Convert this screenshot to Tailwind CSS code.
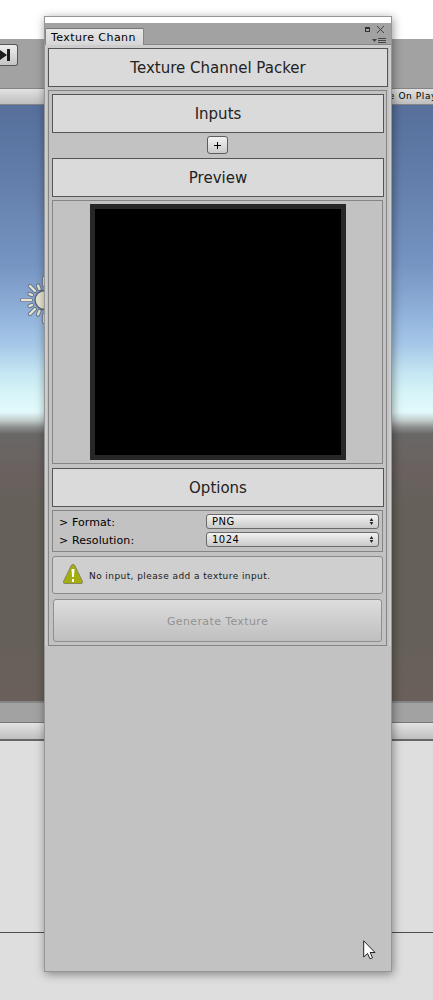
<!DOCTYPE html>
<html lang="en"><head><meta charset="utf-8"><title>Texture Channel Packer</title>
<script src="https://cdn.jsdelivr.net/npm/@tailwindcss/browser@4"></script></head>
<body class="relative h-[1000px] w-[433px] overflow-hidden bg-white font-['DejaVu_Sans',sans-serif] text-black">
<!-- editor behind the window -->
<div class="flex h-[1000px] flex-col">
  <div class="h-[39px] bg-white"></div>
  <div class="h-[49px] bg-[#a2a2a2] pt-[5px]">
    <div class="flex h-[22px] w-[18px] items-center rounded-r-[3px] border border-l-0 border-[#555] bg-linear-to-b from-[#eee] to-[#c4c4c4]">
      <svg width="12" height="14" viewBox="0 0 12 14"><path d="M0 2L7 7L0 12zM7 1h3v12H7z" fill="#1c1c1c"/></svg>
    </div>
  </div>
  <div class="flex h-[17px] items-center justify-end border-t border-b border-[#858585] bg-linear-to-b from-[#e2e2e2] to-[#bebebe]">
    <span class="-mr-[4px] mt-px whitespace-nowrap text-[9px] tracking-[0.6px]">e On Play</span>
  </div>
  <div class="relative h-[596px] bg-[linear-gradient(to_bottom,#566f9b_0px,#6580ad_85px,#7695c2_160px,#8eafd8_205px,#a6c8e8_240px,#c5e6f2_268px,#d8f5f8_290px,#e2fafa_307px,#c4cfce_315px,#8e9190_322px,#696766_329px,#6a6260_360px,#66605a_400px,#66605a_530px,#6b605b_596px)]">
    <svg class="absolute left-[18px] top-[168px]" width="28" height="54" viewBox="0 0 28 54" stroke-linecap="round">
      <g stroke="#5d6778" stroke-opacity=".8" stroke-width="4.200"><path d="M4 27H13M26 5V12M26 42V49M12 13L17 18M12 41L17 36M20 12.500L21.500 16M20 41.500L21.500 38M11.500 21L14 22M11.500 33L14 32"/></g>
      <circle cx="26.500" cy="27" r="9.500" fill="#e9e4cf" stroke="#5d6778" stroke-width="1.500"/>
      <g stroke="#e9e4cf" stroke-width="2.400"><path d="M4 27H13M26 5V12M26 42V49M12 13L17 18M12 41L17 36M20 12.500L21.500 16M20 41.500L21.500 38M11.500 21L14 22M11.500 33L14 32"/></g>
    </svg>
  </div>
  <div class="h-[21px] border-t-2 border-[#858585] bg-[#a2a2a2]"></div>
  <div class="h-[19px] border-t border-b-2 border-t-[#777] border-b-[#666] bg-linear-to-b from-[#e4e4e4] to-[#bfbfbf]"></div>
  <div class="h-[192px] border-b border-[#4c4c4c] bg-[#dedede]"></div>
  <div class="grow bg-[#dedede]"></div>
</div>

<!-- floating window -->
<main class="absolute left-[44px] top-[16px] flex h-[956px] w-[348px] flex-col border border-[#969696] bg-[#c2c2c2] shadow-[1px_2px_9px_rgba(0,0,0,0.42)]">
  <div class="h-[6px] bg-white"></div>
  <header class="flex h-[22px] items-end justify-between border-b border-[#858585] bg-[#a2a2a2]">
    <div class="-mb-px flex h-[17px] w-[99px] items-center rounded-t-[2px] border border-b-0 border-[#858585] border-t-[#777] bg-linear-to-b from-[#e8e8e8] to-[#d6d6d6] pl-[5px]">
      <span class="mt-[2px] whitespace-nowrap text-[11px] leading-[16px] tracking-[0.45px]">Texture Chann</span>
    </div>
    <svg width="24" height="21" viewBox="0 0 24 21" class="mr-[4px]"><path d="M2 4h5v5H2zM3 6v2h3V6z" fill="#333" fill-rule="evenodd"/><path d="M14 3l7 7M21 3l-7 7" stroke="#444" stroke-width="1"/><path d="M9 16h5l-2.500 3zM15 15h8v1h-8zM15 17h8v1h-8zM15 19h8v1h-8z" fill="#444"/></svg>
  </header>
  <div class="flex flex-col border-2 border-t-[3px] border-x-[#cdcdcd] border-y-[#cdcdcd] border-b-0 px-px">
    <h1 class="flex h-[39px] w-[340px] items-center justify-center border border-[#555] bg-[#dadada] pt-[2px] text-[15px] text-[#222]">Texture Channel Packer</h1>
    <section class="mt-[3px] flex h-[556px] w-[339px] flex-col border border-[#858585] px-[3px] pt-[3px]">
      <h2 class="flex h-[39px] w-[332px] items-center justify-center border border-[#555] bg-[#dadada] pt-[2px] text-[15px] text-[#222]">Inputs</h2>
      <button class="mt-[3px] ml-[155px] flex h-[18px] w-[21px] items-center justify-center rounded-[3px] border border-[#5c5c5c] bg-linear-to-b from-[#f2f2f2] to-[#cbcbcb]"><svg width="7" height="7" viewBox="0 0 7 7"><path d="M3 0h1v3h3v1H4v3H3V4H0V3h3z"/></svg></button>
      <h2 class="mt-[4px] flex h-[39px] w-[332px] items-center justify-center border border-[#555] bg-[#dadada] pt-[2px] text-[15px] text-[#222]">Preview</h2>
      <div class="mt-[3px] flex h-[264px] w-[331px] justify-center border border-[#858585] pt-[3px]">
        <div class="h-[256px] w-[256px] border-[5px] border-[#272727] bg-black"></div>
      </div>
      <h2 class="mt-[4px] flex h-[39px] w-[332px] items-center justify-center border border-[#555] bg-[#dadada] pt-[2px] text-[15px] text-[#222]">Options</h2>
      <div class="mt-[3px] flex h-[42px] w-[331px] flex-col gap-[3px] border border-[#858585] pt-[3px] pr-[3px] pl-[6px] text-[11px] leading-[15px]">
        <div class="flex h-[15px] items-center justify-between"><span class="mt-[2px] tracking-[0.1px]">&gt; Format:</span>
          <div class="flex h-[15px] w-[173px] items-center justify-between rounded-[3px] border border-[#6a6a6a] bg-linear-to-b from-[#f2f2f2] to-[#cacaca] pr-[4px] pl-[5px] text-[10px] tracking-[0.5px]"><span>PNG</span><svg width="5" height="7" viewBox="0 0 5 7"><path d="M.7 3L2.500 0L4.300 3zM.7 4h3.600L2.500 7z" fill="#222"/></svg></div></div>
        <div class="flex h-[15px] items-center justify-between"><span class="mt-[2px] tracking-[0.1px]">&gt; Resolution:</span>
          <div class="flex h-[15px] w-[173px] items-center justify-between rounded-[3px] border border-[#6a6a6a] bg-linear-to-b from-[#f2f2f2] to-[#cacaca] pr-[4px] pl-[5px] text-[10px] tracking-[0.5px]"><span>1024</span><svg width="5" height="7" viewBox="0 0 5 7"><path d="M.7 3L2.500 0L4.300 3zM.7 4h3.600L2.500 7z" fill="#222"/></svg></div></div>
      </div>
      <div class="mt-[4px] flex h-[38px] w-[331px] items-center rounded-[3px] border border-[#8a8a8a] bg-[#cfcfcf] pl-[9px]">
        <svg width="22" height="22" viewBox="0 0 22 22"><path d="M9.500 1Q11 -.5 12.500 1L20.500 17.500Q21 19.500 19 19.500H3Q1 19.500 1.500 17.500z" fill="#a3ad0d" stroke="#858762"/><path d="M9.500 5h3l-.6 8h-1.800zM10 15h2v3h-2z" fill="#fff"/></svg>
        <span class="mt-[3px] ml-[5px] whitespace-nowrap text-[9px] tracking-[0.42px] text-[#181818]">No input, please add a texture input.</span>
      </div>
      <button class="mt-[5px] ml-px flex h-[43px] w-[329px] items-center justify-center rounded-[3px] border border-[#8f8f8f] bg-linear-to-b from-[#dddddd] to-[#bfbfbf] pt-[3px] text-[11px] tracking-[0.38px] text-[#929292]">Generate Texture</button>
    </section>
  </div>
  <svg class="mt-auto mb-[11px] ml-[318px]" width="13" height="20" viewBox="0 0 13 20"><path d="M.7.8V17L4.500 13.500L7 18.800L9.500 17.700L7.200 12.500H12z" fill="#fff" stroke="#222" stroke-width="1"/></svg>
</main>
</body></html>
